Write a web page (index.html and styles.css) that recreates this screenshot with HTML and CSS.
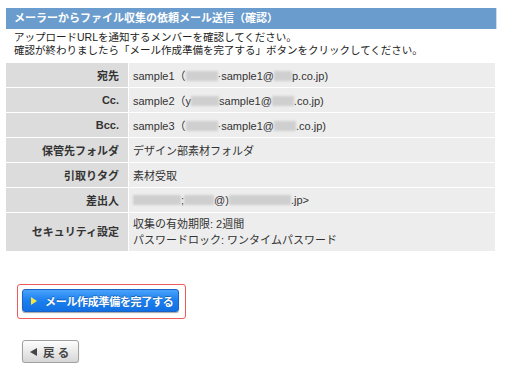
FILE: index.html
```html
<!DOCTYPE html>
<html lang="ja">
<head>
<meta charset="utf-8">
<link rel="stylesheet" href="styles.css">
</head>
<body>
<div class="page">
  <h1 class="title">メーラーからファイル収集の依頼メール送信（確認）</h1>
  <p class="intro">アップロードURLを通知するメンバーを確認してください。<br>確認が終わりましたら「メール作成準備を完了する」ボタンをクリックしてください。</p>
  <table class="info">
    <tr><th>宛先</th><td>sample1（<span class="blur w32"></span>·sample1@<span class="blur w18"></span>p.co.jp)</td></tr>
    <tr><th>Cc.</th><td>sample2（y<span class="blur w28"></span>sample1@<span class="blur w22"></span>.co.jp)</td></tr>
    <tr><th>Bcc.</th><td>sample3（<span class="blur w32"></span>·sample1@<span class="blur w22"></span>.co.jp)</td></tr>
    <tr><th>保管先フォルダ</th><td>デザイン部素材フォルダ</td></tr>
    <tr><th>引取りタグ</th><td>素材受取</td></tr>
    <tr><th>差出人</th><td><span class="blur w48"></span>;<span class="blur w30"></span>@)<span class="blur w62"></span>.jp&gt;</td></tr>
    <tr class="tall"><th>セキュリティ設定</th><td>収集の有効期限: 2週間<br>パスワードロック: ワンタイムパスワード</td></tr>
  </table>
  <div class="actions">
    <div class="highlight">
      <button class="primary"><span class="tri"></span>メール作成準備を完了する</button>
    </div>
  </div>
  <button class="back"><span class="ltri"></span>戻 る</button>
</div>
</body>
</html>
```
FILE: styles.css
```css
html, body { margin: 0; padding: 0; background: #fff; }
body {
  font-family: "Liberation Sans", "Noto Sans CJK JP", sans-serif;
  font-size: 11px;
  color: #222;
}
.page { padding: 8px 0 0 6px; width: 491px; }
.title {
  margin: 0;
  height: 21px;
  line-height: 21px;
  background: #6a9ccd;
  border-right: 1px solid #c9dcf0;
  color: #fff;
  font-size: 11px;
  font-weight: bold;
  padding-left: 8px;
}
.intro {
  margin: 2px 0 0 8px;
  line-height: 13px;
  font-size: 10.5px;
  color: #222;
}
.info {
  margin-top: 6px;
  width: 489px;
  border-collapse: collapse;
}
.info th, .info td {
  height: 24px;
  padding: 0;
  border-bottom: 1px solid #fff;
  vertical-align: middle;
}
.info th {
  width: 113px;
  background: #dcdcdc;
  text-align: right;
  padding-right: 9px;
  border-right: 1px solid #fff;
  font-weight: bold;
  font-size: 11px;
  color: #333;
}
.info td {
  background: #ededed;
  padding-left: 4px;
  font-size: 11px;
  color: #333;
}
.info tr.tall th, .info tr.tall td { height: 38px; line-height: 16px; border-bottom: 0; }
.blur {
  display: inline-block;
  height: 10px;
  vertical-align: -1px;
  background: #cfcfcf;
  filter: blur(1px);
}
.w18 { width: 18px; } .w22 { width: 22px; } .w28 { width: 28px; }
.w30 { width: 30px; } .w32 { width: 32px; } .w48 { width: 48px; } .w62 { width: 62px; }
.actions { margin-top: 33px; padding-left: 11px; }
.highlight {
  display: inline-block;
  border: 1px solid #f05a5a;
  border-radius: 3px;
  padding: 4px 6px 6px 4px;
}
.primary {
  display: flex;
  align-items: center;
  height: 23px;
  white-space: nowrap;
  padding: 0 5px 0 8px;
  border: 1px solid #1b63c4;
  border-radius: 3px;
  background: linear-gradient(#4aa3fb, #1b7ff0 50%, #1270e2);
  box-shadow: 0 1px 1px rgba(0,0,0,0.35);
  color: #fff;
  font-family: "Liberation Sans", "Noto Sans CJK JP", sans-serif;
  font-size: 11px;
  letter-spacing: -0.3px;
  font-weight: bold;
  text-shadow: 0 -1px 0 rgba(0,0,0,0.3);
}
.tri {
  width: 0; height: 0;
  border-left: 6px solid #f5e642;
  border-top: 4px solid transparent;
  border-bottom: 4px solid transparent;
  margin-right: 8px;
}
.back {
  display: flex;
  align-items: center;
  margin: 21px 0 0 16px;
  height: 23px;
  width: 57px;
  padding: 0 0 0 7px;
  border: 1px solid #a0a0a0;
  border-radius: 3px;
  background: linear-gradient(#fdfdfd, #e6e6e6 60%, #d6d6d6);
  box-shadow: 0 1px 1px rgba(0,0,0,0.2);
  color: #444;
  font-family: "Liberation Sans", "Noto Sans CJK JP", sans-serif;
  font-size: 11.5px;
  font-weight: bold;
  white-space: nowrap;
}
.ltri {
  width: 0; height: 0;
  border-right: 7px solid #444;
  border-top: 4px solid transparent;
  border-bottom: 4px solid transparent;
  margin-right: 6px;
}
```
